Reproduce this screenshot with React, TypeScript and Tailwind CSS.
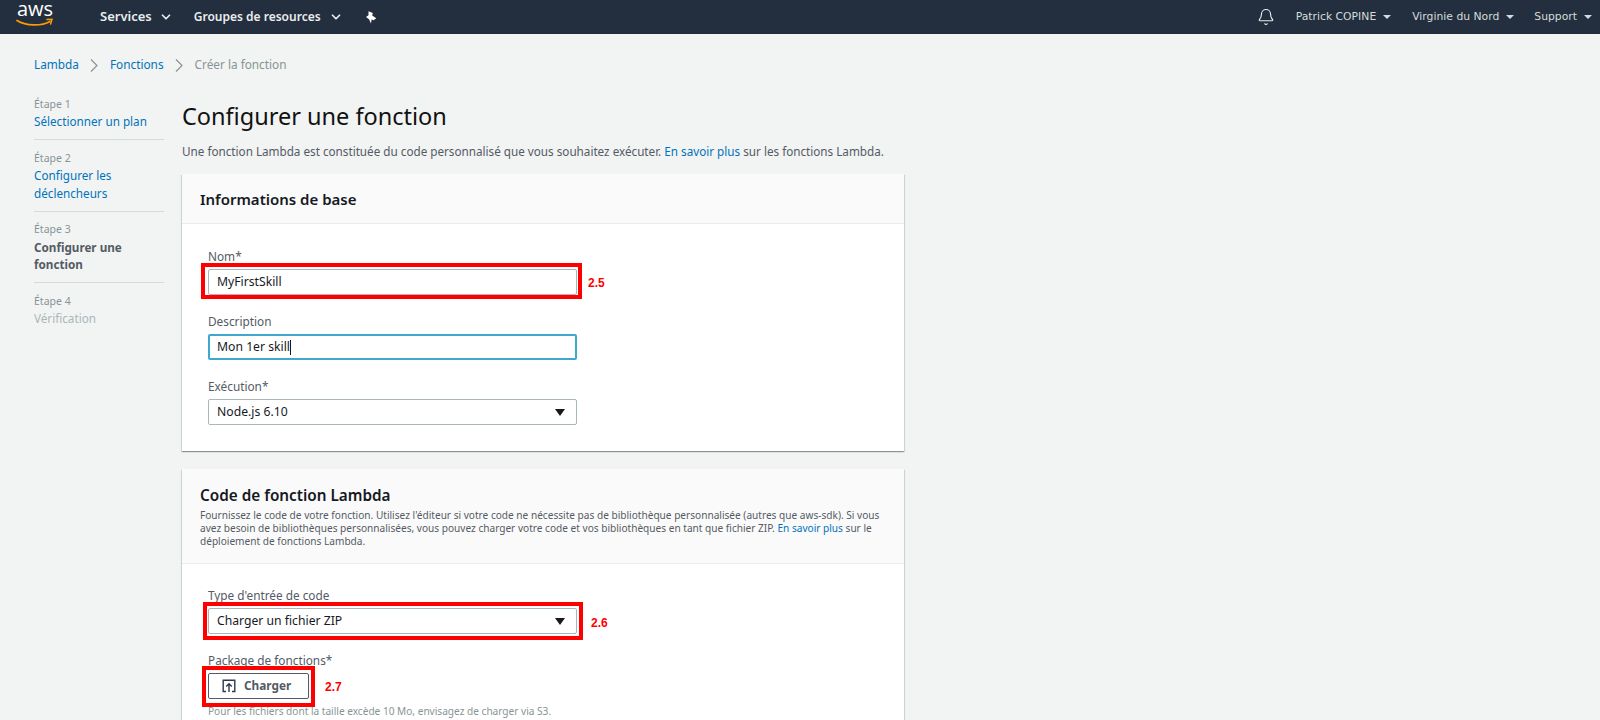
import { Bell, ChevronDown } from "lucide-react";
import type { ReactNode } from "react";

const inputCls = "flex h-[26px] w-[369px] items-center justify-between rounded-[2px] border border-[#aab7b8] bg-white pl-[8px] pr-[11px] pt-px text-[12.2px] text-[#16191f]";
const cardCls = "bg-white shadow-[0_1px_1px_0_rgba(0,28,36,0.3),1px_1px_1px_0_rgba(0,28,36,0.1),-1px_1px_1px_0_rgba(0,28,36,0.1)]";

const Caret = () => <span className="h-0 w-0 border-x-[5px] border-t-[7px] border-x-transparent border-t-[#16191f]" />;
const NavCaret = () => <span className="ml-[7px] h-0 w-0 border-x-[4px] border-t-[4px] border-x-transparent border-t-[#d5dbdb]" />;

const Crumb = () => (
  <svg viewBox="0 0 8 13" className="mx-[11.5px] h-[13px] w-[8px]" fill="none" stroke="#879596" strokeWidth="1.2">
    <path d="M1 .5L7 6.5L1 12.5" />
  </svg>
);

// red annotation drawn over a field, with its number beside it
const Mark = ({ box, pos, text, children }: { box: string; pos: string; text: string; children: ReactNode }) => (
  <div className="relative">
    {children}
    <div className={`absolute border-4 border-[#ff0000] ${box}`} />
    <span className={`absolute text-[12px] font-bold text-[#ff0000] ${pos}`} style={{ fontFamily: '"Liberation Sans", sans-serif' }}>
      {text}
    </span>
  </div>
);

const Step = ({ n, children, last }: { n: number; children: ReactNode; last?: boolean }) => (
  <div className={last ? "pt-[9.5px]" : "border-b border-[#d5dbdb] pt-[9.5px] pb-[8.5px]"}>
    <div className="text-[10.5px] text-[#879596]">Étape {n}</div>
    {children}
  </div>
);

const Label = ({ children }: { children: ReactNode }) => (
  <div className="mb-[4px] text-[11.8px] leading-[17px] text-[#545b64]">{children}</div>
);

export default function App() {
  return (
    <div className="h-[720px] w-[1600px] overflow-hidden bg-[#f2f3f3]" style={{ fontFamily: '"Noto Sans", sans-serif' }}>
      {/* Top nav */}
      <header className="flex h-[34px] items-center bg-[#232f3e] text-white">
        <div className="relative ml-[16px] h-[34px] w-[38px]">
          <span className="absolute left-[1px] top-0 text-[20px] leading-[18px]" style={{ fontFamily: '"Open Sans", sans-serif' }}>aws</span>
          <svg viewBox="0 0 38 10" className="absolute left-0 top-[18px] h-[10px] w-[38px]">
            <path d="M1 2.5C10 8 25 8.5 34 3.5" fill="none" stroke="#f90" strokeWidth="1.7" strokeLinecap="round" />
            <path d="M31 1.6L36 1.4L34.6 6" fill="none" stroke="#f90" strokeWidth="1.5" strokeLinecap="round" />
          </svg>
        </div>
        <nav className="ml-[46px] flex items-center text-[13px] font-semibold text-[#eaeded]">
          <span>Services</span>
          <ChevronDown className="ml-[7px] h-[14px] w-[14px]" strokeWidth={3} />
          <span className="ml-[21px] text-[12px]">Groupes de resources</span>
          <ChevronDown className="ml-[8px] h-[14px] w-[14px]" strokeWidth={3} />
          <svg viewBox="0 0 12 13" className="ml-[22px] h-[13px] w-[12px]" fill="#fff">
            <path d="M3.5 .3L7.8 2L7.2 4.5L11.3 7.2L8.6 9.2L6.6 8.6L6 12.6L4 8.2L1 6L3.5 4.2z" />
          </svg>
        </nav>
        <div className="ml-auto mr-[8px] flex items-center text-[10.8px] text-[#d5dbdb]" style={{ fontFamily: '"DejaVu Sans", sans-serif' }}>
          <Bell className="h-[18px] w-[18px] text-[#eaeded]" strokeWidth={1.5} />
          <span className="ml-[21px]">Patrick COPINE</span>
          <NavCaret />
          <span className="ml-[21px]">Virginie du Nord</span>
          <NavCaret />
          <span className="ml-[20px]">Support</span>
          <NavCaret />
        </div>
      </header>

      {/* Breadcrumb */}
      <div className="mt-[21px] flex h-[20px] items-center pl-[34px] text-[11.8px] text-[#0073bb]">
        <span>Lambda</span>
        <Crumb />
        <span>Fonctions</span>
        <Crumb />
        <span className="text-[#879596]">Créer la fonction</span>
      </div>

      <div className="mt-[11px] flex pl-[34px]">
        {/* Steps */}
        <aside className="w-[130px] text-[11.7px] leading-[17.5px]">
          <Step n={1}><div className="text-[#0073bb]">Sélectionner un plan</div></Step>
          <Step n={2}><div className="text-[#0073bb]">Configurer les déclencheurs</div></Step>
          <Step n={3}><div className="font-bold text-[#545b64]">Configurer une fonction</div></Step>
          <Step n={4} last><div className="text-[#aab7b8]">Vérification</div></Step>
        </aside>

        {/* Main column */}
        <main className="ml-[18px] w-[722px]">
          <h1 className="mt-[14px] text-[23.5px] leading-[32px] text-[#111111]">Configurer une fonction</h1>
          <p className="mt-[11px] whitespace-nowrap text-[11.7px] leading-[16px] text-[#545b64]">
            Une fonction Lambda est constituée du code personnalisé que vous souhaitez exécuter.{" "}
            <span className="text-[#0073bb]">En savoir plus</span> sur les fonctions Lambda.
          </p>

          <section className={`mt-[15px] h-[277px] ${cardCls}`}>
            <div className="flex h-[50px] items-center border-b border-[#eaeded] bg-[#fafafa] pl-[18px] pt-[2px] text-[15px] font-semibold text-[#16191f]">
              Informations de base
            </div>
            <div className="pl-[26px] pt-[24px]">
              <Label>Nom*</Label>
              <Mark box="-left-[7px] -top-[6px] h-[36px] w-[381px]" pos="left-[380px] top-[5px]" text="2.5">
                <div className={inputCls}>MyFirstSkill</div>
              </Mark>
              <div className="mt-[18px]"><Label>Description</Label></div>
              <div className={`${inputCls} !justify-start !border-2 !border-[#3ea8cf] !pl-[7px]`}>
                Mon 1er skill<span className="h-[15px] w-px bg-[#16191f]" />
              </div>
              <div className="mt-[18px]"><Label>Exécution*</Label></div>
              <div className={inputCls}>Node.js 6.10<Caret /></div>
            </div>
          </section>

          <section className={`mt-[18px] h-[300px] ${cardCls}`}>
            <div className="h-[95px] border-b border-[#eaeded] bg-[#fafafa] pl-[18px] pr-[20px] pt-[16px]">
              <div className="text-[15.3px] leading-[20px] font-semibold text-[#16191f]">Code de fonction Lambda</div>
              <p className="mt-[4px] text-[10.1px] leading-[13px] text-[#545b64]">
                Fournissez le code de votre fonction. Utilisez l'éditeur si votre code ne nécessite pas de bibliothèque personnalisée (autres que aws-sdk). Si vous avez besoin de bibliothèques personnalisées, vous pouvez charger votre code et vos bibliothèques en tant que fichier ZIP.{" "}
                <span className="text-[#0073bb]">En savoir plus</span> sur le déploiement de fonctions Lambda.
              </p>
            </div>
            <div className="pl-[26px] pt-[23px]">
              <Label>Type d'entrée de code</Label>
              <Mark box="-left-[5px] -top-[6px] h-[38px] w-[380px]" pos="left-[383px] top-[6px]" text="2.6">
                <div className={inputCls}>Charger un fichier ZIP<Caret /></div>
              </Mark>
              <div className="mt-[18px]"><Label>Package de fonctions*</Label></div>
              <Mark box="-left-[6px] -top-[7px] h-[41px] w-[113px]" pos="left-[117px] top-[5px]" text="2.7">
                <div className="flex h-[26px] w-[101px] items-center rounded-[2px] border border-[#545b64] bg-white pl-[13px] text-[11.8px] font-bold text-[#545b64]">
                  <svg viewBox="0 0 14 14" className="mr-[8px] h-[14px] w-[14px]" fill="none" stroke="#2d3b4e" strokeWidth="1.4">
                    <path d="M4 12.5H1.2V1.2h11.6v11.3H10" />
                    <path d="M7 13V5M4.2 7.6L7 4.8l2.8 2.8" />
                  </svg>
                  Charger
                </div>
              </Mark>
              <p className="mt-[4px] text-[10.1px] leading-[16px] text-[#879596]">Pour les fichiers dont la taille excède 10 Mo, envisagez de charger via S3.</p>
            </div>
          </section>
        </main>
      </div>
    </div>
  );
}
